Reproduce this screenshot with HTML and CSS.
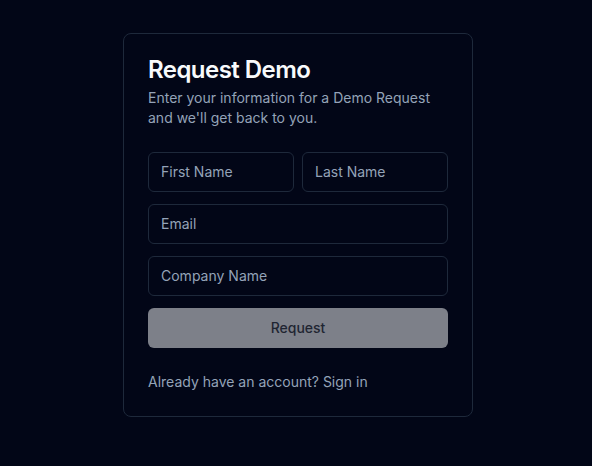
FILE: index.html
```html
<!DOCTYPE html>
<html lang="en">
<head>
<meta charset="utf-8">
<title>Request Demo</title>
<link rel="stylesheet" href="styles.css">
</head>
<body>
<main class="page">
  <section class="card">
    <header class="card-head">
      <h1 class="title">Request Demo</h1>
      <p class="subtitle">Enter your information for a Demo Request and we'll get back to you.</p>
    </header>
    <form class="form">
      <div class="row">
        <input class="field" type="text" placeholder="First Name">
        <input class="field" type="text" placeholder="Last Name">
      </div>
      <input class="field" type="email" placeholder="Email">
      <input class="field" type="text" placeholder="Company Name">
      <button class="submit" type="button" disabled>Request</button>
    </form>
    <p class="footer">Already have an account? <a class="link" href="#">Sign in</a></p>
  </section>
</main>
</body>
</html>
```

FILE: styles.css
```css
* { box-sizing: border-box; }
html, body {
  margin: 0;
  background: #020617;
  font-family: Inter, "Noto Sans", sans-serif;
}
.page {
  padding: 33px 0 0 123px;
}
.card {
  width: 350px;
  border: 1px solid #1e293b;
  border-radius: 8px;
  padding: 24px;
  background: #020617;
}
.card-head {
  display: flex;
  flex-direction: column;
  gap: 6px;
}
.title {
  margin: 0;
  font-size: 24px;
  line-height: 24px;
  font-weight: 600;
  color: #f8fafc;
  letter-spacing: -0.55px;
}
.subtitle {
  margin: 0;
  font-size: 14px;
  line-height: 20px;
  color: #94a3b8;
}
.form {
  margin-top: 24px;
  display: flex;
  flex-direction: column;
  gap: 12px;
}
.row {
  display: grid;
  grid-template-columns: 1fr 1fr;
  gap: 8px;
}
.field {
  height: 40px;
  width: 100%;
  border: 1px solid #1e293b;
  border-radius: 6px;
  background: transparent;
  padding: 0 12px 2px;
  font-family: inherit;
  font-size: 14px;
  color: #f8fafc;
  outline: none;
}
.field::placeholder { color: #94a3b8; }
.submit {
  height: 40px;
  border: 0;
  border-radius: 6px;
  background: #7d8089;
  color: #1f2532;
  padding: 0 16px 2px;
  font-family: inherit;
  font-size: 14px;
  font-weight: 500;
}
.footer {
  margin: 24px 0 0;
  font-size: 14px;
  line-height: 20px;
  color: #94a3b8;
}
.link {
  color: #94a3b8;
  text-decoration: none;
}
```
